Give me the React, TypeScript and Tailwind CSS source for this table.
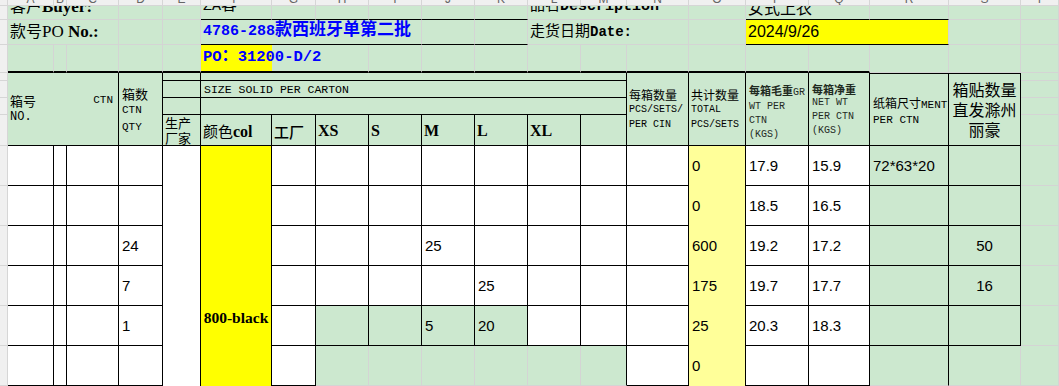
import React from "react";

// grid placement classes, written out so Tailwind picks them up
const COL = [
  "col-start-1", "col-start-2", "col-start-3", "col-start-4", "col-start-5", "col-start-6", "col-start-7",
  "col-start-8", "col-start-9", "col-start-10", "col-start-11", "col-start-12", "col-start-13", "col-start-14",
  "col-start-15", "col-start-16", "col-start-17", "col-start-18", "col-start-19", "col-start-20", "col-start-21",
];
const ROW = [
  "row-start-1", "row-start-2", "row-start-3", "row-start-4", "row-start-5", "row-start-6", "row-start-7",
  "row-start-8", "row-start-9", "row-start-10", "row-start-11", "row-start-12", "row-start-13", "row-start-14",
];
const CS = ["", "col-span-1", "col-span-2", "col-span-3", "col-span-4", "col-span-5", "col-span-6", "col-span-7", "col-span-8"];
const RS = ["", "row-span-1", "row-span-2", "row-span-3", "row-span-4", "row-span-5", "row-span-6"];

const cjk = "font-['Noto_Sans_CJK_SC',sans-serif]";
const mono = "font-['Liberation_Mono','Noto_Sans_CJK_SC',monospace]";
const serif = "font-['Liberation_Serif','Noto_Sans_CJK_SC',serif]";
const sans = "font-['Liberation_Sans','Noto_Sans_CJK_SC',sans-serif]";

const GREEN = "bg-[#cce8cf]";
const WHITE = "bg-white";
const GRID = "border-r border-b border-[#d4d4d4]";
const BLACK = "border-r border-b border-black";
const UNDER = "border-r border-b border-r-[#d4d4d4] border-b-black";
const THICK = "border-r border-b-2 border-r-[#d4d4d4] border-b-black";
const HEAD = "bg-[#f0f0f0] border-r border-b border-[#d6d6d6]";

const letters = "ABCDEFGHIJKLMNOPQRST".split("");

const ctnQty = ["", "", "24", "7", "1", ""];
const total = ["0", "0", "600", "175", "25", "0"];
const gross = ["17.9", "18.5", "19.2", "19.7", "20.3", ""];
const net = ["15.9", "16.5", "17.2", "17.7", "18.3", ""];
const labels = ["", "", "50", "16", "", ""];

const App: React.FC = () => {
  const cells: React.ReactNode[] = [];
  const put = (r: number, c: number, cls: string, children?: React.ReactNode, cs = 1, rs = 1) => {
    cells.push(
      <div key={`${r}-${c}`} className={`${ROW[r]} ${COL[c]} ${CS[cs]} ${RS[rs]} ${cls}`}>
        {children}
      </div>
    );
  };

  const num = (v: string) => <span className={`${sans} text-[15px] leading-[18px]`}>{v}</span>;

  // column letters (scrolled, only their feet show)
  put(0, 0, HEAD);
  letters.forEach((l, i) =>
    put(
      0,
      i + 1,
      `${HEAD} flex items-end justify-center overflow-hidden`,
      <span className={`${sans} text-[12px] leading-[12px] text-[#666]`}>{l}</span>
    )
  );

  // row gutter
  for (let r = 1; r <= 13; r++) put(r, 0, HEAD);

  const topText = "flex items-end overflow-hidden whitespace-nowrap pl-[2px] pb-[1px]";

  // row 1: buyer / description
  put(
    1,
    1,
    `${GREEN} ${GRID} ${topText}`,
    <span className="leading-[22px]">
      <span className={`${cjk} text-[16px]`}>客户</span>
      <span className={`${serif} text-[17px] font-bold`}>Buyer:</span>
    </span>,
    3
  );
  put(1, 4, `${GREEN} ${GRID}`);
  put(1, 5, `${GREEN} ${GRID}`);
  put(
    1,
    6,
    `${GREEN} ${UNDER} ${topText}`,
    <span className="leading-[22px]">
      <span className={`${mono} text-[15px]`}>ZA</span>
      <span className={`${cjk} text-[16px]`}>客</span>
    </span>
  );
  for (let c = 7; c <= 11; c++) put(1, c, `${GREEN} ${UNDER}`);
  put(
    1,
    12,
    `${GREEN} ${GRID} ${topText}`,
    <span className="leading-[22px]">
      <span className={`${cjk} text-[15px]`}>品名</span>
      <span className={`${mono} text-[15px] font-bold`}>Description</span>
    </span>,
    3
  );
  put(1, 15, `${GREEN} ${GRID}`);
  put(
    1,
    16,
    `${GREEN} ${UNDER} ${topText}`,
    <span className={`${cjk} text-[16px] leading-[22px]`}>女式上衣</span>,
    2
  );
  put(1, 18, `${GREEN} ${UNDER}`);
  put(1, 19, `${GREEN} ${GRID}`);
  put(1, 20, `${GREEN} ${GRID}`);

  // row 2: PO number / date
  put(
    2,
    1,
    `${GREEN} ${GRID} ${topText}`,
    <span className="leading-[22px]">
      <span className={`${cjk} text-[16px]`}>款号</span>
      <span className={`${serif} text-[17px]`}>PO </span>
      <span className={`${serif} text-[17px] font-bold`}>No.:</span>
    </span>,
    3
  );
  put(2, 4, `${GREEN} ${GRID}`);
  put(2, 5, `${GREEN} ${GRID}`);
  put(
    2,
    6,
    `${GREEN} ${UNDER} ${topText} text-[#0000ff] font-bold`,
    <span className="leading-[22px]">
      <span className={`${mono} text-[15px]`}>4786-288</span>
      <span className={`${cjk} text-[17px]`}>款西班牙单第二批</span>
    </span>,
    4
  );
  put(2, 10, `${GREEN} ${UNDER}`);
  put(2, 11, `${GREEN} ${UNDER}`);
  put(
    2,
    12,
    `${GREEN} ${GRID} ${topText}`,
    <span className="leading-[22px]">
      <span className={`${cjk} text-[15px]`}>走货日期</span>
      <span className={`${mono} text-[14px] font-bold`}>Date:</span>
    </span>,
    3
  );
  put(2, 15, `${GREEN} ${GRID}`);
  put(
    2,
    16,
    `bg-[#ffff00] ${UNDER} ${topText}`,
    <span className={`${sans} text-[16px] leading-[22px]`}>2024/9/26</span>,
    3
  );
  put(2, 19, `${GREEN} ${GRID}`);
  put(2, 20, `${GREEN} ${GRID}`);

  // row 3: carton PO, thick rule under it
  for (let c = 1; c <= 5; c++) put(3, c, `${GREEN} ${THICK}`);
  put(
    3,
    6,
    `bg-[linear-gradient(90deg,#ffff00_71px,#cce8cf_71px)] ${THICK} ${topText} pb-[3px] text-[#0000ff] font-bold`,
    <span className="leading-[22px]">
      <span className={`${mono} text-[15.5px]`}>PO</span>
      <span className={`${cjk} text-[16px]`}>：</span>
      <span className={`${mono} text-[15.5px]`}>31200-D/2</span>
    </span>,
    3
  );
  for (let c = 9; c <= 17; c++) put(3, c, `${GREEN} ${THICK}`);
  put(3, 18, `${GREEN} ${GRID}`);
  put(3, 19, `${GREEN} ${GRID}`);
  put(3, 20, `${GREEN} ${GRID}`);

  // header block
  put(
    4,
    1,
    `${GREEN} ${BLACK} flex flex-col pt-[19px] pl-[2px] pr-[5px]`,
    <>
      <div className="flex justify-between items-center leading-[17px]">
        <span className={`${cjk} text-[13px]`}>箱号</span>
        <span className={`${mono} text-[11px]`}>CTN</span>
      </div>
      <span className={`${mono} text-[12px] leading-[17px]`}>NO.</span>
    </>,
    3,
    4
  );
  put(
    4,
    4,
    `${GREEN} ${BLACK} flex flex-col pt-[12px] pl-[3px] leading-[17px]`,
    <>
      <span className={`${cjk} text-[13px]`}>箱数</span>
      <span className={`${mono} text-[11px]`}>CTN</span>
      <span className={`${mono} text-[11px]`}>QTY</span>
    </>,
    1,
    4
  );
  put(4, 5, `${GREEN} ${BLACK}`);
  put(4, 6, `${GREEN} ${BLACK}`, null, 8);
  put(5, 5, `${GREEN} ${BLACK}`);
  put(
    5,
    6,
    `${GREEN} ${BLACK} flex items-center pl-[3px] pt-[1px]`,
    <span className={`${mono} text-[11.5px] leading-[14px]`}>SIZE SOLID PER CARTON</span>,
    8
  );
  put(6, 5, `${GREEN} ${BLACK}`);
  put(6, 6, `${GREEN} ${BLACK}`, null, 8);
  put(
    7,
    5,
    `${GREEN} ${BLACK} flex flex-col justify-center pl-[2px] ${cjk} text-[13px] leading-[15px]`,
    <>
      <span>生产</span>
      <span>厂家</span>
    </>
  );
  put(
    7,
    6,
    `${GREEN} ${BLACK} flex items-end pl-[2px] pb-[3px]`,
    <span className="leading-[20px]">
      <span className={`${cjk} text-[15px]`}>颜色</span>
      <span className={`${serif} text-[16px] font-bold`}>col</span>
    </span>
  );
  put(
    7,
    7,
    `${GREEN} ${BLACK} flex items-end pl-[2px] pb-[3px]`,
    <span className={`${cjk} text-[15px] leading-[20px] font-medium`}>工厂</span>
  );
  ["XS", "S", "M", "L", "XL"].forEach((s, i) =>
    put(
      7,
      8 + i,
      `${GREEN} ${BLACK} flex items-end pl-[2px] pb-[4px]`,
      <span className={`${serif} text-[16px] leading-[20px] font-bold`}>{s}</span>
    )
  );
  put(7, 13, `${GREEN} ${BLACK}`);
  put(
    4,
    14,
    `${GREEN} ${BLACK} flex flex-col pt-[14px] pl-[2px] leading-[15px]`,
    <>
      <span className={`${cjk} text-[12px]`}>每箱数量</span>
      <span className={`${mono} text-[10px]`}>PCS/SETS/</span>
      <span className={`${mono} text-[10px]`}>PER CIN</span>
    </>,
    1,
    4
  );
  put(
    4,
    15,
    `${GREEN} ${BLACK} flex flex-col pt-[14px] pl-[2px] leading-[15px]`,
    <>
      <span className={`${cjk} text-[12px]`}>共计数量</span>
      <span className={`${mono} text-[10px]`}>TOTAL</span>
      <span className={`${mono} text-[10px]`}>PCS/SETS</span>
    </>,
    1,
    4
  );
  put(
    4,
    16,
    `${GREEN} ${BLACK} flex flex-col pt-[9px] pl-[3px] leading-[14px] text-[#1f2a1f]`,
    <>
      <span>
        <span className={`${cjk} text-[11px] font-bold`}>每箱毛重</span>
        <span className={`${mono} text-[10px]`}>GR</span>
      </span>
      <span className={`${mono} text-[10px]`}>WT PER</span>
      <span className={`${mono} text-[10px]`}>CTN</span>
      <span className={`${mono} text-[10px]`}>(KGS)</span>
    </>,
    1,
    4
  );
  put(
    4,
    17,
    `${GREEN} ${BLACK} flex flex-col pt-[9px] pl-[3px] leading-[14px] text-[#1f2a1f]`,
    <>
      <span className={`${cjk} text-[11px] font-bold`}>每箱净重</span>
      <span className={`${mono} text-[10px]`}>NET WT</span>
      <span className={`${mono} text-[10px]`}>PER CTN</span>
      <span className={`${mono} text-[10px]`}>(KGS)</span>
    </>,
    1,
    4
  );
  put(
    4,
    18,
    `${GREEN} ${BLACK} border-t border-t-black flex flex-col pt-[21px] pl-[3px] leading-[15px]`,
    <>
      <span>
        <span className={`${cjk} text-[12px]`}>纸箱尺寸</span>
        <span className={`${mono} text-[11px]`}>MENT</span>
      </span>
      <span className={`${mono} text-[11px]`}>PER CTN</span>
    </>,
    1,
    4
  );
  put(
    4,
    19,
    `${GREEN} ${BLACK} border-t border-t-black flex flex-col items-center pt-[5px] ${cjk} text-[16px] leading-[20px]`,
    <>
      <span>箱贴数量</span>
      <span>直发滁州</span>
      <span>丽豪</span>
    </>,
    1,
    4
  );
  for (let r = 4; r <= 7; r++) put(r, 20, `${GREEN} ${GRID}`);

  // data rows
  const pad = "flex items-center pl-[3px]";
  for (let i = 0; i < 6; i++) {
    const r = 8 + i;
    const last = i === 5;
    put(r, 1, `${WHITE} ${BLACK}`);
    put(r, 2, `${WHITE} ${BLACK}`);
    put(r, 3, `${WHITE} ${BLACK}`);
    put(r, 4, `${WHITE} ${BLACK} ${pad}`, num(ctnQty[i]));
    if (i === 0) {
      put(r, 5, `${WHITE} border-r border-black`, null, 1, 6);
      put(
        r,
        6,
        `bg-[#ffff00] border-r border-black flex justify-center pt-[162px]`,
        <span className={`${serif} text-[15.5px] leading-[20px] font-bold`}>800-black</span>,
        1,
        6
      );
    }
    put(r, 7, `${WHITE} ${BLACK}`);
    const sizeVals: Record<number, string> = {};
    if (i === 2) sizeVals[10] = "25";
    if (i === 3) sizeVals[11] = "25";
    if (i === 4) {
      sizeVals[10] = "5";
      sizeVals[11] = "20";
    }
    for (let c = 8; c <= 11; c++) {
      const cls = last ? `${GREEN} ${GRID}` : i === 4 ? `${GREEN} ${BLACK}` : `${WHITE} ${BLACK}`;
      put(r, c, `${cls} ${pad}`, sizeVals[c] ? num(sizeVals[c]) : null);
    }
    put(r, 12, last ? `${GREEN} ${GRID}` : `${WHITE} ${BLACK}`);
    put(r, 13, last ? `${GREEN} border-r border-b border-r-black border-b-[#d4d4d4]` : `${WHITE} ${BLACK}`);
    put(r, 14, `${WHITE} ${BLACK}`);
    put(r, 15, `bg-[#ffff99] border-r border-black ${pad}`, num(total[i]));
    put(r, 16, `${WHITE} ${BLACK} ${pad}`, num(gross[i]));
    put(r, 17, `${WHITE} ${BLACK} ${pad}`, num(net[i]));
    put(
      r,
      18,
      last ? `${GREEN} border-r border-b border-r-black border-b-[#d4d4d4]` : `${GREEN} ${BLACK} ${pad}`,
      i === 0 ? num("72*63*20") : null
    );
    put(
      r,
      19,
      last ? `${GREEN} ${GRID}` : `${GREEN} ${BLACK} flex items-center justify-center`,
      labels[i] ? num(labels[i]) : null
    );
    put(r, 20, `${GREEN} ${GRID}`);
  }

  return (
    <div className="w-[1059px] h-[386px] overflow-hidden bg-white text-black">
      <div className="grid grid-cols-[8px_46px_13px_52px_44px_38px_71px_44px_53px_53px_53px_53px_53px_46px_62px_57px_63px_61px_79px_72px_38px] grid-rows-[6px_14px_25px_28px_8px_17px_17px_31px_40px_40px_40px_40px_40px_40px]">
        {cells}
      </div>
    </div>
  );
};

export default App;
